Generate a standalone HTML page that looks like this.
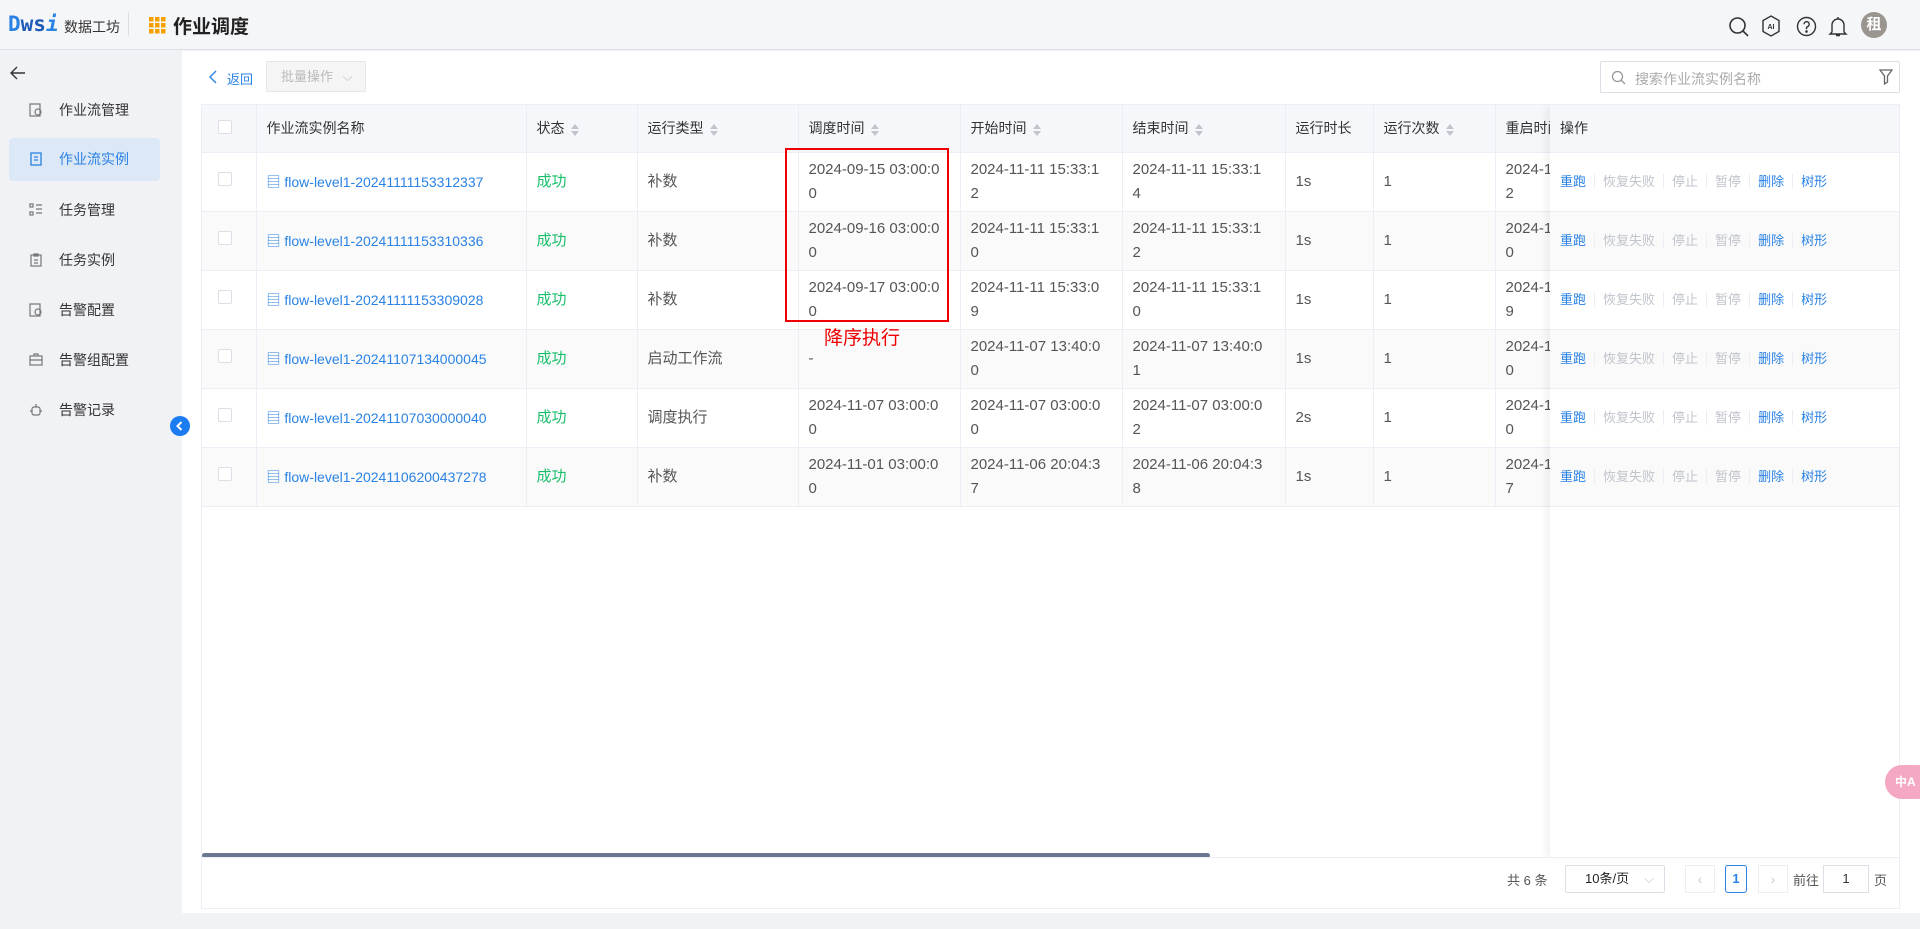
<!DOCTYPE html>
<html><head><meta charset="utf-8">
<style>
*{box-sizing:border-box;margin:0;padding:0}
html,body{background:#f0f2f5}
body{width:1920px;height:929px;overflow:hidden;font-family:"Liberation Sans","Noto Sans CJK SC",sans-serif;font-size:14px;color:#333;position:relative}
.abs{position:absolute}
#hdr{left:0;top:0;width:1920px;height:50px;background:#f5f6f8;border-bottom:1px solid #dcdfe6}
#side{left:0;top:51px;width:180px;height:878px;background:#f0f2f5}
.mi{position:absolute;left:9px;width:151px;height:43px;line-height:43px;padding-left:50px;font-size:14px;color:#333;border-radius:4px}
.mi svg{position:absolute;left:20px;top:14px}
.mi.act{background:#dde8f6;color:#2a82e4}
#main{left:182px;top:51px;width:1738px;height:862px;background:#fff}
table{border-collapse:collapse;table-layout:fixed}
td,th{border-right:1px solid #ebeef5;border-bottom:1px solid #ebeef5;text-align:left;font-weight:normal;padding:0 18px 0 10px;font-size:14px;vertical-align:middle}
th{height:47px;background:#f5f7fa;color:#333}
td{height:59px;line-height:24px;color:#555;word-break:break-all;font-size:15px}
tr.g td{background:#fafafa}
.cb{display:inline-block;width:14px;height:14px;border:1px solid #dcdfe6;border-radius:2px;background:#fff}
td.lk{color:#2a82e4;white-space:nowrap;font-size:14px}
.ok{color:#19be6b}
.rs{white-space:nowrap}
.so{display:inline-block;vertical-align:middle;margin-left:6px;width:8px;height:12px;position:relative}
.so:before{content:"";position:absolute;left:0;top:0;border:4px solid transparent;border-bottom:5px solid #c0c4cc;border-top:0}
.so:after{content:"";position:absolute;left:0;top:7px;border:4px solid transparent;border-top:5px solid #c0c4cc;border-bottom:0}
.ops span{font-size:13px;padding:0 8px;border-right:1px solid #ebeef5}
.ops span:last-child{border-right:0}
.ops .b{color:#2a82e4}.ops .d{color:#c0c4cc}
</style></head><body>
<div id="hdr" class="abs">
  <div class="abs" style="left:8px;top:12px;font-size:21px;font-weight:bold;color:#2a82e4;font-family:'DejaVu Sans Mono',monospace">D<span style="color:#1e5bb8">ws</span><span style="color:#2a82e4;font-style:italic">i</span></div>
  <div class="abs" style="left:64px;top:17px;font-size:14px;color:#333">数据工坊</div>
  <div class="abs" style="left:128px;top:12px;width:1px;height:24px;background:#dcdfe6"></div>
  <svg class="abs" style="left:149px;top:17px" width="17" height="17" viewBox="0 0 17 17" fill="#f5a000"><rect x="0" y="0" width="4.5" height="4.5"/><rect x="6" y="0" width="4.5" height="4.5"/><rect x="12" y="0" width="4.5" height="4.5"/><rect x="0" y="6" width="4.5" height="4.5"/><rect x="6" y="6" width="4.5" height="4.5"/><rect x="12" y="6" width="4.5" height="4.5"/><rect x="0" y="12" width="4.5" height="4.5"/><rect x="6" y="12" width="4.5" height="4.5"/><rect x="12" y="12" width="4.5" height="4.5"/></svg>
  <div class="abs" style="left:173px;top:12px;font-size:19px;color:#222;font-weight:bold">作业调度</div>
  <svg class="abs" style="left:1728px;top:16px" width="22" height="22" viewBox="0 0 22 22" fill="none" stroke="#333" stroke-width="1.6"><circle cx="9.5" cy="9.5" r="7.5"/><path d="M15 15l5 5"/></svg>
  <svg class="abs" style="left:1761px;top:15px" width="20" height="22" viewBox="0 0 20 22" fill="none" stroke="#333" stroke-width="1.4"><path d="M10 1l8 4.5v11L10 21 2 16.5v-11z"/><text x="10" y="14" font-size="7" text-anchor="middle" fill="#333" stroke="none" font-family="Liberation Sans" font-weight="bold">AI</text></svg>
  <svg class="abs" style="left:1796px;top:16px" width="21" height="21" viewBox="0 0 21 21" fill="none" stroke="#333" stroke-width="1.4"><circle cx="10.5" cy="10.5" r="9"/><path d="M8 8.3a2.6 2.6 0 1 1 3.5 2.4c-.7.3-1 .8-1 1.5v1"/><circle cx="10.5" cy="15.5" r=".6" fill="#333"/></svg>
  <svg class="abs" style="left:1828px;top:15px" width="20" height="23" viewBox="0 0 20 23" fill="none" stroke="#333" stroke-width="1.4"><path d="M10 2v2M4 17V10a6 6 0 0 1 12 0v7l2 2H2z M8 20.5h4"/></svg>
  <div class="abs" style="left:1861px;top:12px;width:26px;height:26px;border-radius:50%;background:#9b9590;color:#fff;font-size:15px;font-weight:bold;text-align:center;line-height:26px">租</div>
</div>
<div id="side" class="abs">
  <svg class="abs" style="left:10px;top:15px" width="16" height="14" viewBox="0 0 16 14" fill="none" stroke="#333" stroke-width="1.4"><path d="M15 7H1M7 1L1 7l6 6"/></svg>
  <div class="mi" style="top:38px"><svg width="14" height="14" viewBox="0 0 14 14" fill="none" stroke="#777" stroke-width="1.2"><rect x="1" y="1" width="10" height="12"/><circle cx="9" cy="9" r="3"/></svg>作业流管理</div>
  <div class="mi act" style="top:87px"><svg width="14" height="14" viewBox="0 0 14 14" fill="none" stroke="#2a82e4" stroke-width="1.3"><rect x="2" y="1" width="10" height="12"/><path d="M5 5h4M5 8h4"/></svg>作业流实例</div>
  <div class="mi" style="top:138px"><svg width="14" height="14" viewBox="0 0 14 14" fill="none" stroke="#777" stroke-width="1.2"><rect x="1" y="1" width="3" height="3"/><rect x="1" y="9" width="3" height="3"/><path d="M7 2h6M7 6h6M7 10h6"/></svg>任务管理</div>
  <div class="mi" style="top:188px"><svg width="14" height="14" viewBox="0 0 14 14" fill="none" stroke="#777" stroke-width="1.2"><rect x="2" y="2" width="10" height="11"/><path d="M5 1h4v2H5zM5 7h4M5 10h4"/></svg>任务实例</div>
  <div class="mi" style="top:238px"><svg width="14" height="14" viewBox="0 0 14 14" fill="none" stroke="#777" stroke-width="1.2"><rect x="1" y="1" width="10" height="12"/><circle cx="9" cy="9" r="3"/></svg>告警配置</div>
  <div class="mi" style="top:288px"><svg width="14" height="14" viewBox="0 0 14 14" fill="none" stroke="#777" stroke-width="1.2"><rect x="1" y="3" width="12" height="9"/><path d="M5 3V1h4v2M1 7h12"/></svg>告警组配置</div>
  <div class="mi" style="top:338px"><svg width="14" height="14" viewBox="0 0 14 14" fill="none" stroke="#777" stroke-width="1.2"><rect x="3" y="4" width="8" height="8" rx="2"/><path d="M1 8h2M11 8h2M7 1v3"/></svg>告警记录</div>
</div>
<div class="abs" style="left:170px;top:416px;width:20px;height:20px;border-radius:50%;background:#1a7cf0;color:#fff;z-index:3"><svg width="20" height="20" viewBox="0 0 20 20" fill="none" stroke="#fff" stroke-width="2"><path d="M11.5 6l-4 4 4 4"/></svg></div>
<div id="main" class="abs">
  <svg class="abs" style="left:26px;top:19px" width="10" height="14" viewBox="0 0 10 14" fill="none" stroke="#2a82e4" stroke-width="1.4"><path d="M8 1L2 7l6 6"/></svg>
  <div class="abs" style="left:45px;top:18px;font-size:13px;color:#2a82e4">返回</div>
  <div class="abs" style="left:84px;top:10px;width:100px;height:31px;background:#f5f5f5;border:1px solid #e4e7ed;color:#bbb;font-size:13px;line-height:29px;padding-left:14px">批量操作 <span style="margin-left:6px">⌵</span></div>
  <div class="abs" style="left:1418px;top:10px;width:300px;height:32px;border:1px solid #dcdfe6;border-radius:2px">
    <svg class="abs" style="left:10px;top:8px" width="15" height="15" viewBox="0 0 15 15" fill="none" stroke="#999" stroke-width="1.3"><circle cx="6.5" cy="6.5" r="5"/><path d="M10 10l4 4"/></svg>
    <div class="abs" style="left:34px;top:7px;font-size:14px;color:#aaa">搜索作业流实例名称</div>
    <svg class="abs" style="left:278px;top:7px" width="14" height="16" viewBox="0 0 14 16" fill="none" stroke="#666" stroke-width="1.3"><path d="M1 1h12L8.5 7v6l-3 2V7z"/></svg>
  </div>
  <div class="abs" style="left:19px;top:53px;width:1699px;height:805px;border:1px solid #ebeef5;overflow:hidden">
  <table style="width:1800px">
   <colgroup><col style="width:54px"><col style="width:270px"><col style="width:111px"><col style="width:161px"><col style="width:162px"><col style="width:162px"><col style="width:163px"><col style="width:88px"><col style="width:122px"><col style="width:507px"></colgroup>
   <tr><th style="text-align:center"><span class="cb"></span></th><th>作业流实例名称</th><th>状态<i class="so"></i></th><th>运行类型<i class="so"></i></th><th>调度时间<i class="so"></i></th><th>开始时间<i class="so"></i></th><th>结束时间<i class="so"></i></th><th>运行时长</th><th>运行次数<i class="so"></i></th><th>重启时间</th></tr>
   <tr><td style="text-align:center"><span class="cb"></span></td><td class="lk">▤ flow-level1-20241111153312337</td><td class="ok">成功</td><td>补数</td><td>2024-09-15 03:00:00</td><td>2024-11-11 15:33:12</td><td>2024-11-11 15:33:14</td><td>1s</td><td>1</td><td class="rs">2024-11-11 15:33:1<br>2</td></tr>
   <tr class="g"><td style="text-align:center"><span class="cb"></span></td><td class="lk">▤ flow-level1-20241111153310336</td><td class="ok">成功</td><td>补数</td><td>2024-09-16 03:00:00</td><td>2024-11-11 15:33:10</td><td>2024-11-11 15:33:12</td><td>1s</td><td>1</td><td class="rs">2024-11-11 15:33:1<br>0</td></tr>
   <tr><td style="text-align:center"><span class="cb"></span></td><td class="lk">▤ flow-level1-20241111153309028</td><td class="ok">成功</td><td>补数</td><td>2024-09-17 03:00:00</td><td>2024-11-11 15:33:09</td><td>2024-11-11 15:33:10</td><td>1s</td><td>1</td><td class="rs">2024-11-11 15:33:0<br>9</td></tr>
   <tr class="g"><td style="text-align:center"><span class="cb"></span></td><td class="lk">▤ flow-level1-20241107134000045</td><td class="ok">成功</td><td>启动工作流</td><td>-</td><td>2024-11-07 13:40:00</td><td>2024-11-07 13:40:01</td><td>1s</td><td>1</td><td class="rs">2024-11-07 13:40:0<br>0</td></tr>
   <tr><td style="text-align:center"><span class="cb"></span></td><td class="lk">▤ flow-level1-20241107030000040</td><td class="ok">成功</td><td>调度执行</td><td>2024-11-07 03:00:00</td><td>2024-11-07 03:00:00</td><td>2024-11-07 03:00:02</td><td>2s</td><td>1</td><td class="rs">2024-11-07 03:00:0<br>0</td></tr>
   <tr class="g"><td style="text-align:center"><span class="cb"></span></td><td class="lk">▤ flow-level1-20241106200437278</td><td class="ok">成功</td><td>补数</td><td>2024-11-01 03:00:00</td><td>2024-11-06 20:04:37</td><td>2024-11-06 20:04:38</td><td>1s</td><td>1</td><td class="rs">2024-11-06 20:04:3<br>7</td></tr>
  </table>
  <div class="abs" style="left:1348px;top:0;width:351px;height:752px;background:#fff;box-shadow:-4px 0 8px rgba(0,0,0,.06)">
   <table style="width:351px">
    <tr><th style="border-right:0">操作</th></tr>
    <tr><td class="ops" style="padding-left:2px;border-right:0"><span class="b">重跑</span><span class="d">恢复失败</span><span class="d">停止</span><span class="d">暂停</span><span class="b">删除</span><span class="b">树形</span></td></tr>
    <tr class="g"><td class="ops" style="padding-left:2px;border-right:0"><span class="b">重跑</span><span class="d">恢复失败</span><span class="d">停止</span><span class="d">暂停</span><span class="b">删除</span><span class="b">树形</span></td></tr>
    <tr><td class="ops" style="padding-left:2px;border-right:0"><span class="b">重跑</span><span class="d">恢复失败</span><span class="d">停止</span><span class="d">暂停</span><span class="b">删除</span><span class="b">树形</span></td></tr>
    <tr class="g"><td class="ops" style="padding-left:2px;border-right:0"><span class="b">重跑</span><span class="d">恢复失败</span><span class="d">停止</span><span class="d">暂停</span><span class="b">删除</span><span class="b">树形</span></td></tr>
    <tr><td class="ops" style="padding-left:2px;border-right:0"><span class="b">重跑</span><span class="d">恢复失败</span><span class="d">停止</span><span class="d">暂停</span><span class="b">删除</span><span class="b">树形</span></td></tr>
    <tr class="g"><td class="ops" style="padding-left:2px;border-right:0"><span class="b">重跑</span><span class="d">恢复失败</span><span class="d">停止</span><span class="d">暂停</span><span class="b">删除</span><span class="b">树形</span></td></tr>
   </table>
  </div>
  <div class="abs" style="left:0;top:748px;width:1008px;height:5px;border-radius:3px;background:#6b7790"></div>
  <div class="abs" style="left:0;top:752px;width:1699px;height:1px;background:#ebeef5"></div>
  <div class="abs" style="left:1305px;top:765px;font-size:13px;color:#555">共 6 条</div>
  <div class="abs" style="left:1363px;top:760px;width:100px;height:28px;border:1px solid #dcdfe6;border-radius:2px;font-size:13px;line-height:26px;padding-left:19px;color:#222">10条/页<span style="position:absolute;right:10px;color:#c0c4cc">⌵</span></div>
  <div class="abs" style="left:1483px;top:760px;width:30px;height:28px;border:1px solid #ebeef5;color:#ccc;text-align:center;line-height:26px">‹</div>
  <div class="abs" style="left:1523px;top:760px;width:22px;height:28px;border:1px solid #2a82e4;border-radius:3px;color:#2a82e4;font-weight:bold;text-align:center;line-height:26px;font-size:13px">1</div>
  <div class="abs" style="left:1556px;top:760px;width:30px;height:28px;border:1px solid #ebeef5;color:#ccc;text-align:center;line-height:26px">›</div>
  <div class="abs" style="left:1591px;top:765px;font-size:13px;color:#555">前往</div>
  <div class="abs" style="left:1621px;top:760px;width:46px;height:28px;border:1px solid #dcdfe6;text-align:center;line-height:26px;font-size:13px">1</div>
  <div class="abs" style="left:1672px;top:765px;font-size:13px;color:#555">页</div>
  </div>
</div>
<div class="abs" style="left:785px;top:148px;width:164px;height:174px;border:2px solid #e00"></div>
<div class="abs" style="left:824px;top:323px;font-size:19px;color:#e00">降序执行</div>
<div class="abs" style="left:1885px;top:765px;width:50px;height:34px;border-radius:17px;background:#f5a8c4;color:#fff;font-size:12px;padding:8px 0 0 10px;font-weight:bold">中A</div>
</body></html>
